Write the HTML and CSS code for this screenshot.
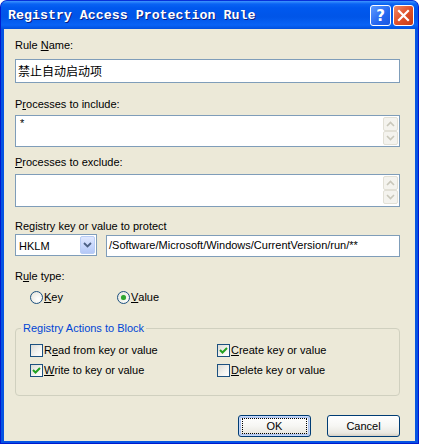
FILE: index.html
```html
<!DOCTYPE html>
<html>
<head>
<meta charset="utf-8">
<link rel="stylesheet" href="styles.css">
</head>
<body>
<div class="window">
  <div class="titlebar">
    <span class="title">Registry Access Protection Rule</span>
    <div class="tbtns">
      <span class="tbtn help">?</span>
      <span class="tbtn close">
        <svg width="21" height="21" viewBox="0 0 21 21"><path d="M6 6 L15 15 M15 6 L6 15" stroke="#fff" stroke-width="2.2" stroke-linecap="square"/></svg>
      </span>
    </div>
  </div>
  <div class="client">
    <div class="label l1">Rule <u>N</u>ame:</div>
    <div class="edit name">禁止自动启动项</div>
    <div class="label l2">P<u>r</u>ocesses to include:</div>
    <div class="memo m1">
      <span class="memo-text">*</span>
      <div class="sb">
        <span class="sbtn"><svg width="9" height="6" viewBox="0 0 9 6"><path d="M1 5 L4.5 1.5 L8 5" fill="none" stroke="#C9C7BA" stroke-width="1.6"/></svg></span>
        <span class="sbtn"><svg width="9" height="6" viewBox="0 0 9 6"><path d="M1 1 L4.5 4.5 L8 1" fill="none" stroke="#C9C7BA" stroke-width="1.6"/></svg></span>
      </div>
    </div>
    <div class="label l3"><u>P</u>rocesses to exclude:</div>
    <div class="memo m2">
      <span class="memo-text"></span>
      <div class="sb">
        <span class="sbtn"><svg width="9" height="6" viewBox="0 0 9 6"><path d="M1 5 L4.5 1.5 L8 5" fill="none" stroke="#C9C7BA" stroke-width="1.6"/></svg></span>
        <span class="sbtn"><svg width="9" height="6" viewBox="0 0 9 6"><path d="M1 1 L4.5 4.5 L8 1" fill="none" stroke="#C9C7BA" stroke-width="1.6"/></svg></span>
      </div>
    </div>
    <div class="label l4">Registry key or value to protect</div>
    <div class="keyrow">
      <div class="combo">
        <span class="combo-text">HKLM</span>
        <span class="drop"><svg width="9" height="6" viewBox="0 0 9 6"><path d="M1 1 L4.5 4.5 L8 1" fill="none" stroke="#4D6185" stroke-width="1.8"/></svg></span>
      </div>
      <div class="edit path">/Software/Microsoft/Windows/CurrentVersion/run/**</div>
    </div>
    <div class="label l5">R<u>u</u>le type:</div>
    <div class="radios">
      <span class="opt"><span class="radio"></span><u>K</u>ey</span>
      <span class="opt opt2"><span class="radio on"><span class="dot"></span></span><u>V</u>alue</span>
    </div>
    <fieldset class="group">
      <legend>Registry Actions to Block</legend>
      <div class="checks">
        <span class="opt"><span class="cb"></span>R<u>e</u>ad from key or value</span>
        <span class="opt"><span class="cb"><svg width="11" height="11" viewBox="0 0 11 11"><path d="M2 5 L4.5 7.5 L9 3" fill="none" stroke="#21A121" stroke-width="2"/></svg></span><u>C</u>reate key or value</span>
        <span class="opt"><span class="cb"><svg width="11" height="11" viewBox="0 0 11 11"><path d="M2 5 L4.5 7.5 L9 3" fill="none" stroke="#21A121" stroke-width="2"/></svg></span><u>W</u>rite to key or value</span>
        <span class="opt"><span class="cb"></span><u>D</u>elete key or value</span>
      </div>
    </fieldset>
    <div class="buttons">
      <span class="btn default"><span class="focus">OK</span></span>
      <span class="btn">Cancel</span>
    </div>
  </div>
</div>
</body>
</html>
```

FILE: styles.css
```css
html, body {
  margin: 0;
  padding: 0;
}
body {
  background: #FFFFFF;
  width: 422px;
  height: 447px;
  overflow: hidden;
  font-family: Tahoma, "Liberation Sans", Arial, sans-serif;
  font-size: 11px;
  color: #000;
}
.window {
  width: 419px;
  height: 444px;
  background: #0553E3;
  border-radius: 7px 7px 0 0;
  box-sizing: border-box;
  border: 1px solid #0019CF;
  border-top-color: #0831D9;
  display: flex;
  flex-direction: column;
}
.titlebar {
  height: 28px;
  flex: none;
  border-radius: 6px 6px 0 0;
  background: linear-gradient(to bottom, #3D95FF 0px, #0A63F3 3px, #0058EE 7px, #0055E8 16px, #0863F6 24px, #0050DE 28px);
  display: flex;
  align-items: center;
  justify-content: space-between;
  padding: 0 4px 0 7px;
}
.title {
  font-family: "Liberation Mono", "DejaVu Sans Mono", monospace;
  font-weight: bold;
  font-size: 13.3px;
  color: #fff;
  text-shadow: 1px 1px 0 #0A1E80;
  margin-top: 1px;
}
.tbtns {
  display: flex;
  gap: 2px;
  margin-top: 1px;
}
.tbtn {
  width: 21px;
  height: 21px;
  box-sizing: border-box;
  border: 1px solid #fff;
  border-radius: 3px;
  display: flex;
  align-items: center;
  justify-content: center;
}
.help {
  background: linear-gradient(135deg, #5E9BFF 0%, #2466F0 60%, #1A56E0 100%);
  color: #fff;
  font-family: "DejaVu Sans", sans-serif;
  font-weight: bold;
  font-size: 15px;
}
.close {
  background: linear-gradient(135deg, #F08A6A 0%, #E0512A 50%, #C53A16 100%);
}
.close svg { display: block; margin: -1px; }
.client {
  flex: 1;
  margin: 0 3px 2px 3px;
  background: #ECE9D8;
  padding: 10px 15px 0 11px;
  display: flex;
  flex-direction: column;
  align-items: stretch;
}
.label {
  line-height: 13px;
  height: 13px;
  white-space: nowrap;
}
.l2 { margin-top: 15px; }
.l3 { margin-top: 9px; }
.l4 { margin-top: 13px; }
.l5 { margin-top: 13px; }
.edit {
  box-sizing: border-box;
  border: 1px solid #7F9DB9;
  background: #fff;
  white-space: nowrap;
  overflow: hidden;
}
.name {
  margin-top: 7px;
  height: 24px;
  padding: 3px 0 0 2px;
  font-family: "Noto Sans CJK SC", sans-serif;
  font-size: 12px;
  line-height: 16px;
}
.memo {
  box-sizing: border-box;
  border: 1px solid #7F9DB9;
  background: #fff;
  display: flex;
  justify-content: space-between;
}
.m1 { margin-top: 4px; height: 32px; }
.m2 { margin-top: 5px; height: 33px; }
.memo-text {
  padding: 1px 0 0 4px;
  line-height: 13px;
}
.sb {
  display: flex;
  flex-direction: column;
  padding: 1px 1px 0 0;
}
.sbtn {
  width: 15px;
  height: 14px;
  box-sizing: border-box;
  border: 1px solid #E2E0D6;
  border-radius: 2px;
  background: #F4F3EE;
  display: flex;
  align-items: center;
  justify-content: center;
}
.keyrow {
  margin-top: 1px;
  display: flex;
  align-items: flex-start;
  gap: 9px;
}
.combo {
  width: 82px;
  height: 22px;
  box-sizing: border-box;
  border: 1px solid #7F9DB9;
  background: #fff;
  display: flex;
  align-items: center;
  justify-content: space-between;
  padding: 0 1px 0 3px;
}
.combo-text { padding-top: 2px; }
.drop {
  width: 15px;
  height: 18px;
  box-sizing: border-box;
  border: 1px solid #B9CDF5;
  border-radius: 2px;
  background: linear-gradient(to bottom, #E0E8FE 0%, #C5D5FC 60%, #B4C8F6 100%);
  display: flex;
  align-items: center;
  justify-content: center;
}
.path {
  flex: 1;
  height: 22px;
  margin-top: 1px;
  padding: 3px 0 0 2px;
  line-height: 13px;
}
.radios {
  margin-top: 7px;
  display: flex;
  padding-left: 15px;
  height: 14px;
}
.opt {
  display: flex;
  align-items: center;
  white-space: nowrap;
  line-height: 13px;
}
.opt2 { margin-left: 54px; }
.radio {
  width: 13px;
  height: 13px;
  box-sizing: border-box;
  border: 1px solid #1C5180;
  border-radius: 50%;
  background: radial-gradient(circle at 65% 65%, #fff 0%, #ECEBE4 70%, #D8D6CA 100%);
  margin-right: 1px;
  display: flex;
  align-items: center;
  justify-content: center;
}
.dot {
  width: 5px;
  height: 5px;
  border-radius: 50%;
  background: #2FA52F;
  box-shadow: 0 0 1px #7ED07E;
}
.group {
  margin: 18px 0 0 0;
  padding: 0;
  height: 74px;
  box-sizing: border-box;
  border: 1px solid #D0D0BF;
  border-radius: 4px;
  min-width: 0;
}
.group legend {
  color: #0046D5;
  padding: 0 2px;
  margin-left: 5px;
  line-height: 13px;
}
.checks {
  display: grid;
  grid-template-columns: 187px auto;
  row-gap: 7px;
  padding: 9px 0 0 14px;
}
.cb {
  width: 13px;
  height: 13px;
  box-sizing: border-box;
  border: 1px solid #1C5180;
  background: linear-gradient(135deg, #DCDBD5 0%, #F5F5F1 60%, #fff 100%);
  margin-right: 1px;
  display: flex;
  align-items: center;
  justify-content: center;
}
.cb svg { display: block; }
.buttons {
  margin-top: 19px;
  display: flex;
  justify-content: flex-end;
  gap: 16px;
}
.btn {
  width: 73px;
  height: 22px;
  box-sizing: border-box;
  border: 1px solid #003C74;
  border-radius: 3px;
  background: linear-gradient(to bottom, #FFFFFF 0%, #F6F6F3 50%, #EAE8E1 85%, #D6D0C5 100%);
  display: flex;
  align-items: center;
  justify-content: center;
}
.default {
  box-shadow: inset 0 0 0 1px #C6D7F7, inset 0 0 0 2px #AEC6F2;
}
.focus {
  width: 65px;
  height: 16px;
  box-sizing: border-box;
  border: 1px dotted #000;
  display: flex;
  align-items: center;
  justify-content: center;
}
```
